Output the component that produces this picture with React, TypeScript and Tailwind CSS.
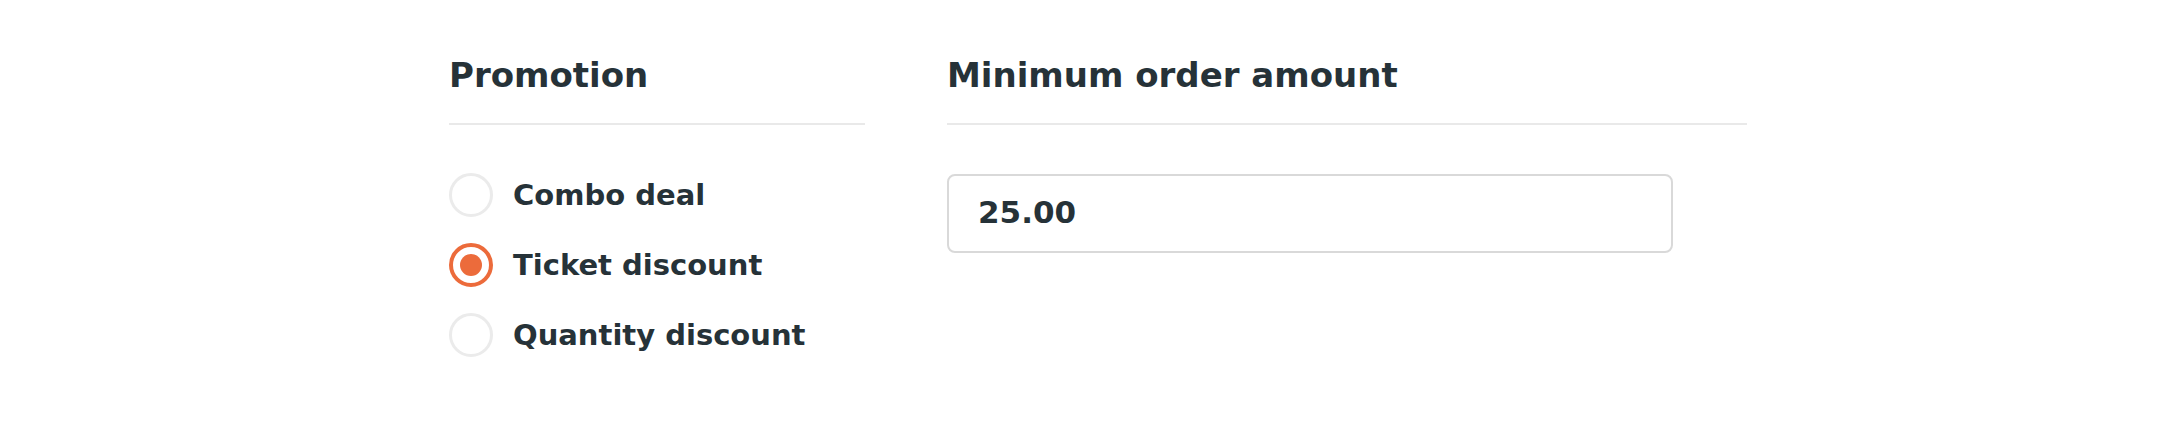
import { useState } from 'react'

const PROMOTIONS = [
  { id: 'combo', label: 'Combo deal' },
  { id: 'ticket', label: 'Ticket discount' },
  { id: 'quantity', label: 'Quantity discount' },
]

function Radio({ checked }: { checked: boolean }) {
  if (checked) {
    return (
      <span className="flex h-[44px] w-[44px] shrink-0 items-center justify-center rounded-full border-[4px] border-[#ec6b3b]">
        <span className="h-[22px] w-[22px] rounded-full bg-[#ec6b3b]" />
      </span>
    )
  }
  return <span className="h-[44px] w-[44px] shrink-0 rounded-full border-[3px] border-[#ebebeb]" />
}

export default function App() {
  const [promotion, setPromotion] = useState('ticket')
  const [amount, setAmount] = useState('25.00')

  return (
    <div className="h-[428px] w-full bg-white font-['DejaVu_Sans',sans-serif] text-[#263238]">
      <div className="flex gap-[82px] pl-[449px] pt-[55px]">
        {/* Promotion */}
        <section className="w-[416px]">
          <h2 className="border-b-2 border-[#e9e9e9] pb-[28px] text-[34px] font-bold leading-[40px]">
            Promotion
          </h2>
          <div className="mt-[35px] flex flex-col">
            {PROMOTIONS.map((p) => (
              <label
                key={p.id}
                onClick={() => setPromotion(p.id)}
                className="flex h-[70px] cursor-pointer items-center gap-[20px]"
              >
                <Radio checked={promotion === p.id} />
                <span className="text-[29px] font-semibold leading-[34px]">{p.label}</span>
              </label>
            ))}
          </div>
        </section>

        {/* Minimum order amount */}
        <section className="w-[800px]">
          <h2 className="border-b-2 border-[#e9e9e9] pb-[28px] text-[34px] font-bold leading-[40px]">
            Minimum order amount
          </h2>
          <input
            value={amount}
            onChange={(e) => setAmount(e.target.value)}
            className="mt-[49px] h-[79px] w-[726px] rounded-[8px] border-2 border-[#d9d9d9] pb-[4px] pl-[29px] text-[31px] font-semibold text-[#263238] outline-none"
          />
        </section>
      </div>
    </div>
  )
}
